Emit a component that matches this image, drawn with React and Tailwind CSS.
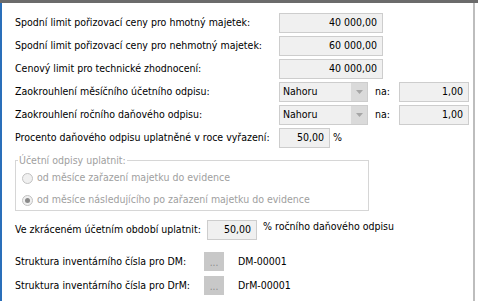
import React from 'react';

const font = { fontFamily: '"DejaVu Sans Condensed", "DejaVu Sans", "Liberation Sans", sans-serif' };

const Field = ({ value, w = 'w-[104px]' }) => (
    <div className={`${w} h-[20px] bg-[#f0f0f0] border border-[#cdcdcd] flex items-center justify-end pr-[5px] text-[10.5px] text-black`}>
        {value}
    </div>
);

const Combo = ({ value }) => (
    <div className="w-[89px] h-[20px] bg-[#f0f0f0] border border-[#cdcdcd] flex items-stretch text-[10.5px]">
        <div className="flex-1 flex items-center pl-[3px]">{value}</div>
        <div className="w-[16px] bg-[#dadada] flex items-center justify-center">
            <svg width="7" height="4" viewBox="0 0 7 4"><path d="M0 0h7L3.5 4z" fill="#a6a6a6" /></svg>
        </div>
    </div>
);

const Row = ({ label, children, className = '' }) => (
    <div className={`flex items-center h-[20px] ${className}`}>
        <div className="w-[264px] text-[10.5px] text-black whitespace-nowrap">{label}</div>
        {children}
    </div>
);

const Radio = ({ checked, label }) => (
    <div className="flex items-center gap-[4px] h-[14px]">
        <div className="w-[11px] h-[11px] rounded-full border border-[#c2c2c2] bg-[#f0f0f0] flex items-center justify-center">
            {checked && <div className="w-[5px] h-[5px] rounded-full bg-[#8a8a8a]" />}
        </div>
        <span className="text-[10.5px] text-[#a0a0a0] whitespace-nowrap">{label}</span>
    </div>
);

export default function App() {
    return (
        <div className="w-[478px] h-[301px] bg-white overflow-hidden flex flex-col" style={font}>
            <div className="h-[3px] bg-[#6b6b6b] shrink-0" />
            <div className="flex-1 flex">
                <div className="w-[2px] bg-[#2a6fba]" />
                <div className="w-[471px] pl-[13px] pt-[10px] flex flex-col">
                    <Row label="Spodní limit pořizovací ceny pro hmotný majetek:"><Field value="40 000,00" /></Row>
                    <Row label="Spodní limit pořizovací ceny pro nehmotný majetek:" className="mt-[3px]"><Field value="60 000,00" /></Row>
                    <Row label="Cenový limit pro technické zhodnocení:" className="mt-[3px]"><Field value="40 000,00" /></Row>
                    <Row label="Zaokrouhlení měsíčního účetního odpisu:" className="mt-[3px]">
                        <Combo value="Nahoru" />
                        <span className="text-[10.5px] ml-[7px] w-[24px]">na:</span>
                        <Field value="1,00" w="w-[70px]" />
                    </Row>
                    <Row label="Zaokrouhlení ročního daňového odpisu:" className="mt-[3px]">
                        <Combo value="Nahoru" />
                        <span className="text-[10.5px] ml-[7px] w-[24px]">na:</span>
                        <Field value="1,00" w="w-[70px]" />
                    </Row>
                    <Row label="Procento daňového odpisu uplatněné v roce vyřazení:" className="mt-[3px]">
                        <Field value="50,00" w="w-[51px]" />
                        <span className="text-[10.5px] ml-[3px]">%</span>
                    </Row>
                    <div className="relative mt-[12px] w-[354px] h-[51px] border border-[#d6d6d6] pl-[6px] pt-[10px] flex flex-col gap-[8px]">
                        <span className="absolute left-[2px] top-[-8px] bg-white px-[1px] text-[10.5px] text-[#a0a0a0] leading-[14px]">Účetní odpisy uplatnit:</span>
                        <Radio label="od měsíce zařazení majetku do evidence" />
                        <Radio checked label="od měsíce následujícího po zařazení majetku do evidence" />
                    </div>
                    <div className="flex items-center h-[20px] mt-[9px]">
                        <div className="w-[192px] text-[10.5px] whitespace-nowrap">Ve zkráceném účetním období uplatnit:</div>
                        <Field value="50,00" w="w-[50px]" />
                        <span className="text-[10.5px] ml-[6px] self-start mt-[-1px]">% ročního daňového odpisu</span>
                    </div>
                    <div className="flex items-center h-[19px] mt-[12px]">
                        <div className="w-[189px] text-[10.5px] whitespace-nowrap">Struktura inventárního čísla pro DM:</div>
                        <div className="w-[20px] h-[19px] bg-[#c8c8c8] text-[#8a8a8a] text-[10px] flex items-end justify-center pb-[3px] leading-none">...</div>
                        <span className="text-[10.5px] ml-[14px]">DM-00001</span>
                    </div>
                    <div className="flex items-center h-[19px] mt-[5px]">
                        <div className="w-[189px] text-[10.5px] whitespace-nowrap">Struktura inventárního čísla pro DrM:</div>
                        <div className="w-[20px] h-[19px] bg-[#c8c8c8] text-[#8a8a8a] text-[10px] flex items-end justify-center pb-[3px] leading-none">...</div>
                        <span className="text-[10.5px] ml-[14px]">DrM-00001</span>
                    </div>
                </div>
                <div className="w-[2px] bg-[#bdbdbd]" />
                <div className="flex-1" />
            </div>
        </div>
    );
}
